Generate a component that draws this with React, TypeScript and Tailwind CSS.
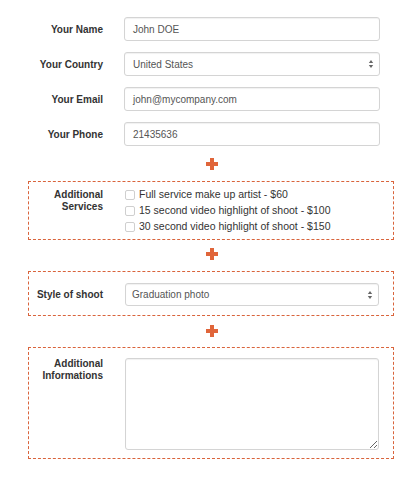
import React from "react";

const font = { fontFamily: '"Liberation Sans", Arial, Helvetica, sans-serif' };

function Arrows() {
  return (
    <svg width="6" height="10" viewBox="0 0 6 10" className="shrink-0">
      <path d="M3 1 L5.2 4 L0.8 4 Z" fill="#666" />
      <path d="M3 9 L5.2 6 L0.8 6 Z" fill="#666" />
    </svg>
  );
}

function Plus() {
  return (
    <div className="flex justify-center pl-[2px]">
      <svg width="12" height="12" viewBox="0 0 12 12">
        <rect x="4" y="0" width="4" height="12" fill="#e0653a" />
        <rect x="0" y="4" width="12" height="4" fill="#e0653a" />
      </svg>
    </div>
  );
}

function TextRow({ label, value, select }: { label: string; value: string; select?: boolean }) {
  return (
    <div className="flex items-center">
      <div className="w-[75px] text-right text-[10px] font-bold text-[#333]">{label}</div>
      <div className="ml-[21px] flex h-[24px] w-[256px] items-center justify-between rounded-[3px] border border-[#d4d4d4] bg-white pl-[8px] pr-[5px] text-[10px] text-[#555] shadow-[inset_0_1px_1px_rgba(0,0,0,0.06)]">
        <span>{value}</span>
        {select && <Arrows />}
      </div>
    </div>
  );
}

function Check({ text }: { text: string }) {
  return (
    <div className="flex h-[16px] items-center">
      <div className="h-[10px] w-[10px] rounded-[2px] border border-[#cfcfcf] bg-white" />
      <span className="ml-[4px] text-[10.5px] text-[#333]">{text}</span>
    </div>
  );
}

export default function App() {
  return (
    <div style={font} className="h-[479px] w-[420px] bg-white pl-[28px] pr-[26px] pt-[17px]">
      <div className="flex flex-col gap-[11px]">
        <TextRow label="Your Name" value="John DOE" />
        <TextRow label="Your Country" value="United States" select />
        <TextRow label="Your Email" value="john@mycompany.com" />
        <TextRow label="Your Phone" value="21435636" />
      </div>

      <div className="pb-[11px] pt-[12px]">
        <Plus />
      </div>

      <div className="flex border border-dashed border-[#d9643c] pb-[4px] pt-[5px]">
        <div className="mt-[2px] w-[74px] text-right text-[10px] font-bold leading-[12px] text-[#333]">
          Additional
          <br />
          Services
        </div>
        <div className="ml-[22px] flex flex-col">
          <Check text="Full service make up artist - $60" />
          <Check text="15 second video highlight of shoot - $100" />
          <Check text="30 second video highlight of shoot - $150" />
        </div>
      </div>

      <div className="pb-[11px] pt-[8px]">
        <Plus />
      </div>

      <div className="flex items-center border border-dashed border-[#d9643c] pb-[9px] pt-[11px]">
        <div className="w-[74px] text-right text-[10px] font-bold text-[#333]">Style of shoot</div>
        <div className="ml-[22px] flex h-[23px] w-[254px] items-center justify-between rounded-[3px] border border-[#d4d4d4] bg-white pl-[6px] pr-[5px] text-[10px] text-[#555] shadow-[inset_0_1px_1px_rgba(0,0,0,0.06)]">
          <span>Graduation photo</span>
          <Arrows />
        </div>
      </div>

      <div className="pb-[10px] pt-[9px]">
        <Plus />
      </div>

      <div className="flex border border-dashed border-[#d9643c] pb-[8px] pt-[10px]">
        <div className="w-[74px] text-right text-[10px] font-bold leading-[12px] text-[#333]">
          Additional
          <br />
          Informations
        </div>
        <textarea
          className="ml-[22px] block h-[92px] w-[254px] rounded-[3px] border border-[#d4d4d4] bg-white text-[10px] text-[#555] shadow-[inset_0_1px_1px_rgba(0,0,0,0.06)] outline-none"
          defaultValue=""
        />
      </div>
    </div>
  );
}
